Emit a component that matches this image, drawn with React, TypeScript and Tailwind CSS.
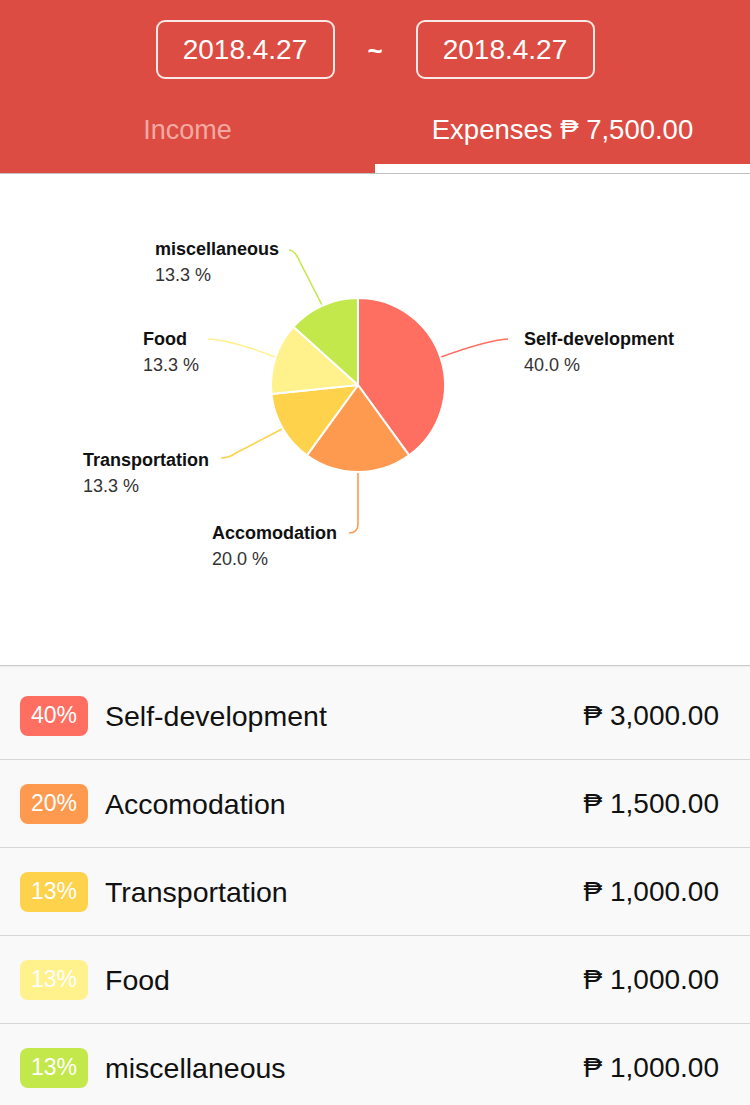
import React from "react";

const font = { fontFamily: '"Liberation Sans", Arial, "DejaVu Sans", sans-serif' };

const items = [
  { name: "Self-development", pct: 40, label: "40.0 %", amount: "3,000.00", color: "#fe6e61", badge: "bg-[#fe6e61]" },
  { name: "Accomodation", pct: 20, label: "20.0 %", amount: "1,500.00", color: "#fe9a50", badge: "bg-[#fe9a50]" },
  { name: "Transportation", pct: 13.33, label: "13.3 %", amount: "1,000.00", color: "#fed24a", badge: "bg-[#fed24a]" },
  { name: "Food", pct: 13.33, label: "13.3 %", amount: "1,000.00", color: "#fff18c", badge: "bg-[#fff18c]" },
  { name: "miscellaneous", pct: 13.34, label: "13.3 %", amount: "1,000.00", color: "#c3e84b", badge: "bg-[#c3e84b]" },
];

// chart drawn in page coordinates (section starts at y=174)
const cx = 358;
const cy = 385;
const r = 87;

const pt = (deg: number) => {
  const a = (deg * Math.PI) / 180;
  return [cx + r * Math.sin(a), cy - r * Math.cos(a)];
};

const slicePath = (from: number, to: number) => {
  const [x1, y1] = pt(from);
  const [x2, y2] = pt(to);
  const large = to - from > 180 ? 1 : 0;
  return `M${cx},${cy} L${x1},${y1} A${r},${r} 0 ${large} 1 ${x2},${y2} Z`;
};

const leaders = [
  { d: "M441,357 Q488,340 508,339", color: "#fe6e61", x: 524, y: 338 },
  { d: "M358,472 L358,524 Q358,533 349,533", color: "#fe9a50", x: 212, y: 532 },
  { d: "M282,429 L236,453 Q229,458 221,458", color: "#fed24a", x: 83, y: 459 },
  { d: "M275,357 Q232,340 208,339", color: "#fff18c", x: 143, y: 338 },
  { d: "M322,305 L300,262 Q295,250 289,250", color: "#c3e84b", x: 155, y: 248 },
];

function PieChart() {
  let start = 0;
  const slices = items.map((it) => {
    const end = start + (it.pct / 100) * 360;
    const s = { d: slicePath(start, end), color: it.color };
    start = end;
    return s;
  });

  return (
    <svg width="750" height="491" viewBox="0 174 750 491">
      {leaders.map((l, i) => (
        <path key={i} d={l.d} fill="none" stroke={l.color} strokeWidth="1.6" />
      ))}
      {slices.map((s, i) => (
        <path key={i} d={s.d} fill={s.color} stroke="#ffffff" strokeWidth="2" strokeLinejoin="round" />
      ))}
      {leaders.map((l, i) => (
        <g key={i} style={font}>
          <text x={l.x} y={l.y + 6.5} fontSize="18" fontWeight="700" fill="#111">
            {items[i].name}
          </text>
          <text x={l.x} y={l.y + 32.5} fontSize="18" fill="#333">
            {items[i].label}
          </text>
        </g>
      ))}
    </svg>
  );
}

export default function App() {
  return (
    <div className="w-full min-h-[1105px] bg-[#f9f9f9]" style={font}>
      {/* Header */}
      <div className="bg-[#dd4c42] border-b border-[#c4c4c4]">
        <div className="flex justify-center pt-[20px]">
          <div className="w-[179px] h-[59px] border-2 border-[#fbe9e7] rounded-[9px] flex items-center justify-center text-white text-[28px]">
            2018.4.27
          </div>
          <div className="w-[81px] flex items-center justify-center text-white text-[26px] font-bold pt-[4px]">~</div>
          <div className="w-[179px] h-[59px] border-2 border-[#fbe9e7] rounded-[9px] flex items-center justify-center text-white text-[28px]">
            2018.4.27
          </div>
        </div>
        <div className="flex">
          <div className="w-1/2 flex flex-col">
            <div className="h-[85px] pt-[36px] leading-[30px] text-center text-[27px] text-[#f3a9a3]">Income</div>
            <div className="h-[9px]" />
          </div>
          <div className="w-1/2 flex flex-col">
            <div className="h-[85px] pt-[36px] leading-[30px] text-center text-[27.5px] text-white">Expenses ₱ 7,500.00</div>
            <div className="h-[9px] bg-white" />
          </div>
        </div>
      </div>

      {/* Chart */}
      <div className="h-[492px] bg-white border-b border-[#c9c9c9] shadow-[0_1px_2px_rgba(0,0,0,0.06)]">
        <PieChart />
      </div>

      {/* List */}
      <div className="pt-[6px]">
        {items.map((it) => (
          <div key={it.name} className="h-[88px] flex items-center border-b border-[#d6d6d6] pl-[20px] pr-[31px]">
            <div className={`w-[68px] h-[40px] rounded-[8px] flex items-center justify-center text-white text-[23px] ${it.badge}`}>
              {Math.round(it.pct)}%
            </div>
            <div className="ml-[17px] flex-1 text-[28.5px] text-[#111] pt-[1px]">{it.name}</div>
            <div className="text-[28px] text-[#111] pt-[1px]">₱ {it.amount}</div>
          </div>
        ))}
      </div>
    </div>
  );
}
